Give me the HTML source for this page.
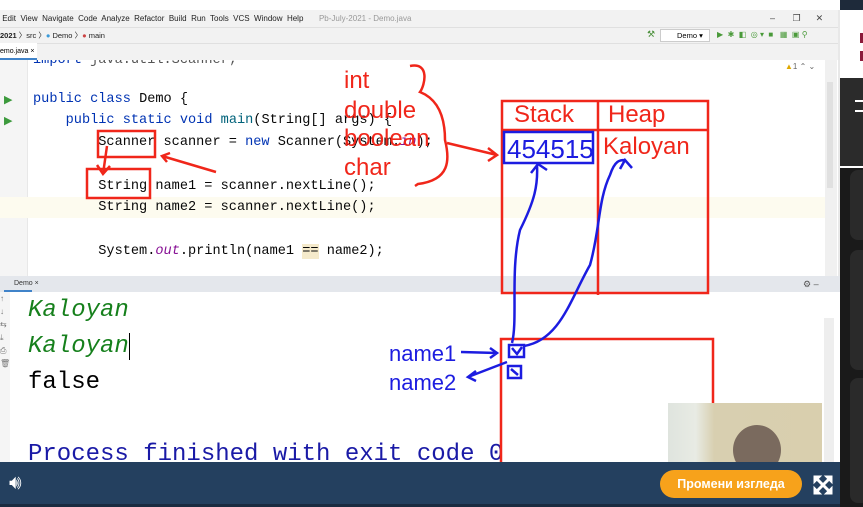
<!DOCTYPE html>
<html><head><meta charset="utf-8"><style>
*{margin:0;padding:0;box-sizing:border-box}
body{width:863px;height:507px;overflow:hidden;background:#fff;font-family:"Liberation Sans",sans-serif;position:relative}
.a{position:absolute}
.mono{font-family:"Liberation Mono",monospace}
.code{position:absolute;left:33px;font-size:13.6px;color:#080808;white-space:pre;font-family:"Liberation Mono",monospace}
.kw{color:#0033b3}
.top{z-index:3}
</style></head><body>
<div class="code" style="top:53px;color:#555"><span class="kw">import</span> java.util.Scanner;</div>
<div class="a" style="left:0;top:0;width:840px;height:10px;background:#fff"></div>
<div class="a" style="left:0;top:10px;width:840px;height:17px;background:#f2f2f2;font-size:8px;color:#222;line-height:17px;white-space:pre"> Edit  View  Navigate  Code  Analyze  Refactor  Build  Run  Tools  VCS  Window  Help       <span style="color:#999">Pb-July-2021 - Demo.java</span></div>
<div class="a" style="left:770px;top:10px;font-size:9px;line-height:17px;color:#444;white-space:pre">–       ❐      ✕</div>
<div class="a" style="left:0;top:27px;width:840px;height:16px;background:#f2f2f2;border-top:1px solid #e0e0e0;font-size:7.5px;line-height:16px;color:#222;white-space:pre"><b>2021</b> 〉src 〉<span style="color:#3a9ad9">●</span> Demo 〉<span style="color:#c44">●</span> main</div>
<div class="a" style="left:647px;top:29px;width:6px;height:8px;color:#4a8f3a;font-size:9px">⚒</div>
<div class="a" style="left:660px;top:29px;width:50px;height:13px;background:#fff;border:1px solid #ccc;font-size:7.5px;line-height:11px;padding-left:16px">Demo ▾</div>
<div class="a" style="left:717px;top:30px;font-size:8px;color:#4a9a3a;white-space:pre">▶  ✱  ◧  ◎ ▾  ■   ▦  ▣ ⚲</div>
<div class="a" style="left:0;top:43px;width:840px;height:17px;background:#f2f2f2;border-top:1px solid #e0e0e0"></div>
<div class="a" style="left:0;top:43px;width:37px;height:17px;background:#fff;font-size:7px;line-height:17px;border-bottom:2px solid #4083c9">emo.java ×</div>
<div class="a" style="left:0;top:60px;width:27px;height:216px;background:#f5f5f5"></div>
<div class="a" style="left:27px;top:60px;width:1px;height:216px;background:#e8e8e8"></div>
<div class="a" style="left:0;top:197px;width:830px;height:21px;background:#fdfbef"></div>
<div class="a" style="left:825px;top:60px;width:12px;height:216px;background:#f0f0f0"></div>
<div class="a" style="left:827px;top:82px;width:6px;height:106px;background:#e0e0e0"></div>
<div class="a" style="left:785px;top:62px;font-size:8px;color:#666"><span style="color:#e0a800">▲</span>1 ⌃ ⌄</div>
<div class="a" style="left:838px;top:10px;width:2px;height:266px;background:#e8e8e8"></div>
<div class="a" style="left:4px;top:93px;color:#3c9a3c;font-size:11px">▶</div>
<div class="a" style="left:4px;top:114px;color:#3c9a3c;font-size:11px">▶</div>
<div class="code" style="top:92px"><span class="kw">public class</span> Demo {</div>
<div class="code" style="top:113px">    <span class="kw">public static void</span> <span style="color:#00627a">main</span>(String[] args) {</div>
<div class="code" style="top:135px">        Scanner scanner = <span class="kw">new</span> Scanner(System.<span style="color:#871094;font-style:italic">in</span>);</div>
<div class="code" style="top:179px">        String name1 = scanner.nextLine();</div>
<div class="code" style="top:200px">        String name2 = scanner.nextLine();</div>
<div class="code" style="top:244px">        System.<span style="color:#871094;font-style:italic">out</span>.println(name1 <span style="background:#f5eacb">==</span> name2);</div>
<div class="a" style="left:0;top:276px;width:840px;height:16px;background:#e4e7ec;font-size:7px;line-height:16px;color:#333;padding-left:14px">Demo ×<span style="position:absolute;left:803px;color:#555;font-size:9px">⚙ –</span></div>
<div class="a" style="left:4px;top:290px;width:28px;height:2px;background:#4083c9"></div>
<div class="a" style="left:0;top:292px;width:10px;height:170px;background:#f5f5f5;font-size:8px;color:#777;line-height:13px">↑<br>↓<br>⇆<br>⤓<br>⎙<br>🗑</div>
<div class="a" style="left:824px;top:318px;width:10px;height:144px;background:#eee"></div>
<div class="a mono" style="left:28px;top:293px;font-size:24px;line-height:36px;white-space:pre"><i style="color:#16801c">Kaloyan</i><br><i style="color:#16801c">Kaloyan</i><span style="border-left:1px solid #000"></span><br>false<br><br><span style="color:#1a1aa6">Process finished with exit code 0</span></div>
<div class="a top" style="left:668px;top:403px;width:154px;height:59px;background:linear-gradient(90deg,#dfe4de 0,#e8ebe4 18%,#d8cfb0 30%,#d9cfae 100%);overflow:hidden"><div class="a" style="left:65px;top:22px;width:48px;height:50px;border-radius:50%;background:#7a6a5e"></div></div>
<div class="a top" style="left:840px;top:0;width:23px;height:10px;background:#1e2a3a"></div>
<div class="a" style="left:840px;top:10px;width:23px;height:68px;background:#fff"></div>
<div class="a" style="left:860px;top:33px;width:3px;height:10px;background:#8b1a3a"></div>
<div class="a" style="left:860px;top:51px;width:3px;height:10px;background:#8b1a3a"></div>
<div class="a" style="left:840px;top:78px;width:23px;height:88px;background:#2b2b2b"></div>
<div class="a" style="left:855px;top:100px;width:8px;height:12px;border-top:2px solid #fff;border-bottom:2px solid #fff"></div>
<div class="a" style="left:840px;top:166px;width:23px;height:2px;background:#fff"></div>
<div class="a" style="left:840px;top:168px;width:23px;height:339px;background:#1a1a1a"></div>
<div class="a" style="left:850px;top:170px;width:20px;height:70px;background:#2a2a2a;border-radius:8px"></div>
<div class="a" style="left:850px;top:250px;width:20px;height:120px;background:#2a2a2a;border-radius:8px"></div>
<div class="a" style="left:850px;top:378px;width:20px;height:125px;background:#2a2a2a;border-radius:8px"></div>
<div class="a top" style="left:0;top:462px;width:840px;height:45px;background:#24405f"></div>
<div class="a top" style="left:0;top:504px;width:840px;height:3px;background:#1a2b40"></div>
<div class="a top" style="left:9px;top:472px;color:#fff;font-size:20px">🔊︎</div>
<div class="a top" style="left:660px;top:470px;width:142px;height:28px;border-radius:14px;background:#f7a21b;color:#fff;font-weight:bold;font-size:12.5px;text-align:center;line-height:28px">Промени изгледа</div>
<svg class="a top" style="left:813px;top:475px" width="20" height="20"><g stroke="#fff" stroke-width="3" fill="#fff"><path d="M3 3 L17 17 M17 3 L3 17"/><path d="M1 1 h7 l-7 7z M19 1 h-7 l7 7z M1 19 h7 l-7 -7z M19 19 h-7 l7 -7z" stroke-width="1"/></g></svg>
<svg class="a" style="left:0;top:0;z-index:2" width="863" height="507">
<g fill="none" stroke="#f0261a" stroke-width="2.5">
<rect x="98" y="131" width="57" height="26"/>
<rect x="87" y="169" width="63" height="29"/>
<path d="M107 146 L103 174 M97 165 L103 174 L110 166"/>
<path d="M216 172 L162 156 M170 153 L162 156 L167 162"/>
<rect x="502" y="101" width="206" height="192"/>
<line x1="598" y1="101" x2="598" y2="295"/>
<line x1="502" y1="130" x2="708" y2="130"/>
<rect x="501" y="339" width="212" height="130"/>
<path d="M410 66 C430 62 425 85 420 92 C440 100 445 120 445 140 C450 160 450 180 418 184 L415 186"/>
<path d="M447 143 L497 155 M488 148 L497 155 L488 161"/>
</g>
<g fill="none" stroke="#1c1ce0" stroke-width="2.5">
<rect x="504" y="132" width="89" height="31"/>
<rect x="509" y="345" width="15" height="12"/>
<path d="M512 348 L517 354 L522 347"/>
<rect x="508" y="366" width="13" height="12"/>
<path d="M511 369 L518 375"/>
<path d="M461 352 L497 353 M490 348 L497 353 L490 358"/>
<path d="M507 362 L468 377 M476 371 L468 377 L476 381"/>
<path d="M512 343 C518 320 510 270 520 230 C535 200 538 185 537 165 M531 173 L538 164 L547 170"/>
<path d="M524 346 C560 340 570 300 590 265 C600 230 598 200 610 175 C615 160 620 160 625 160 M620 169 L625 160 L632 168"/>
</g>
<g font-family="Liberation Sans,sans-serif">
<g fill="#f0261a" font-size="24">
<text x="344" y="88">int</text><text x="344" y="118">double</text><text x="344" y="146">boolean</text><text x="344" y="175">char</text>
<text x="514" y="122">Stack</text><text x="608" y="122">Heap</text><text x="603" y="154">Kaloyan</text>
</g>
<text x="507" y="158" fill="#1c1ce0" font-size="26">454515</text>
<g fill="#1c1ce0" font-size="22"><text x="389" y="361">name1</text><text x="389" y="390">name2</text></g>
</g>
</svg>
</body></html>
